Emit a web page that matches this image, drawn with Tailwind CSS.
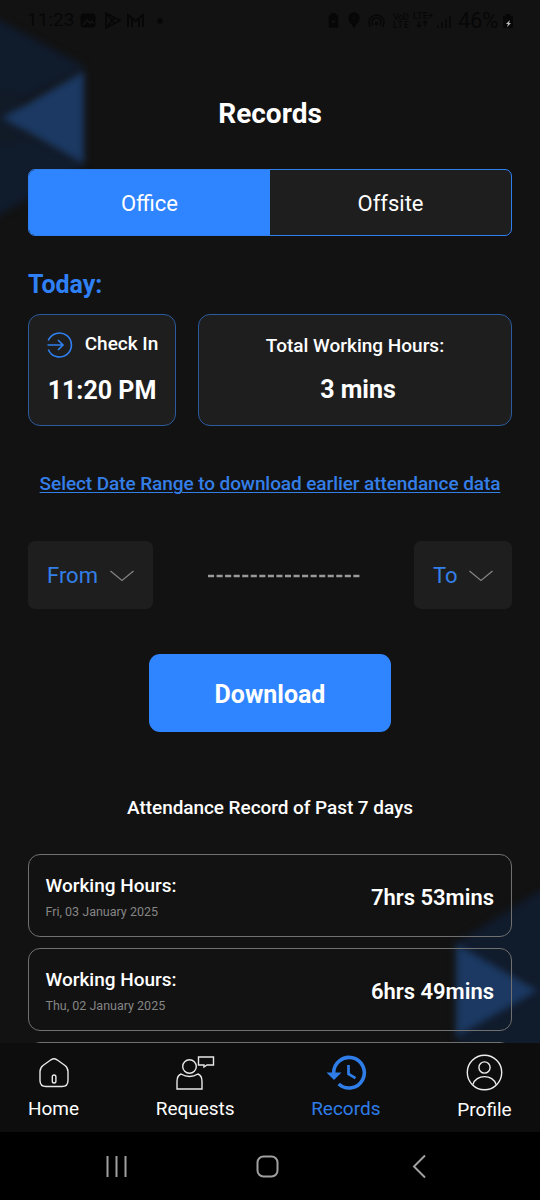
<!DOCTYPE html>
<html lang="en">
<head>
<meta charset="utf-8">
<title>Records</title>
<script src="https://cdn.jsdelivr.net/npm/@tailwindcss/browser@4"></script>
</head>
<body class="bg-[#121212]">
<div class="relative isolate flex h-[1200px] w-[540px] flex-col overflow-hidden bg-[#121212] font-['Roboto',sans-serif] text-white">

  <!-- blurred background triangles -->
  <svg class="absolute inset-0 -z-10" width="540" height="1200" viewBox="0 0 540 1200">
    <defs><filter id="soft" x="-30%" y="-30%" width="160%" height="160%" color-interpolation-filters="sRGB"><feGaussianBlur stdDeviation="3.500"/></filter></defs>
    <g filter="url(#soft)">
      <path d="M-30 4L86 67L0 112L-30 112Z" fill="#101b2c"/>
      <path d="M-30 122L0 122L86 166L-30 232Z" fill="#101b2c"/>
      <path d="M-30 90H20V146H-30Z" fill="#111a27"/>
      <path d="M2 118L84 71V164Z" fill="#1b3963"/>
      <path d="M570 872L454 944L538 987L570 987Z" fill="#101b2c"/>
      <path d="M570 985H538L454 1040L500 1070H570Z" fill="#101b2c"/>
      <path d="M538 990L456 944V1037Z" fill="#1b3963"/>
    </g>
  </svg>

  <!-- status bar -->
  <header class="flex h-10 shrink-0 items-center pl-[27px] text-[#070707]">
    <span class="w-[53px] text-[19px]">11:23</span>
    <svg width="86" height="20" viewBox="0 0 86 20" fill="none" stroke="#070707">
      <rect x="1" y="4" width="14" height="13" rx="2" fill="#070707"/><path d="M3 15l4-5 3 3 2-2 2 3" stroke="#151515" stroke-width="1.3"/>
      <path d="M26 3v15l14-7.500zM26 3l9 11M26 18l9-11" stroke-width="1.600"/>
      <path d="M48 17V5l7.500 6L63 5v12M52 17V9M59 17V9" stroke-width="2"/>
      <circle cx="80" cy="11" r="2.800" fill="#070707" stroke="none"/>
    </svg>
    <svg class="ml-auto" width="126" height="20" viewBox="0 0 126 20" fill="none" stroke="#070707" stroke-width="1.500">
      <path d="M2.500 6h2V4h4v2h2v11h-8z" fill="#070707"/><path d="M5 11.500h3" stroke="#151515"/>
      <path d="M27 17c-2-4-5-5-5-9a5 5 0 0 1 10 0c0 4-3 5-5 9z" fill="#070707"/><circle cx="27" cy="8" r="1.500" fill="#151515"/>
      <path d="M43.500 17a7.500 7.500 0 1 1 12 0M46 15a4.500 4.500 0 1 1 7 0"/><circle cx="49.500" cy="13.500" r="1"/>
      <g fill="#070707" stroke="none" font-family="Roboto" font-weight="500" font-size="9">
        <text x="66" y="10" textLength="16">VoD</text><text x="66" y="18" textLength="16">LTE</text><text x="86" y="9" textLength="20">LTE+</text>
      </g>
      <path d="M92 11v6m-2-2l2 2 2-2M98 17v-6m-2 2l2-2 2 2" stroke-width="1.200"/>
      <path d="M111 15v3M115 12v6M119 9v9M123 6v12"/>
    </svg>
    <span class="ml-[5px] w-[43px] whitespace-nowrap text-[22px] tracking-[-0.3px]">46%</span>
    <svg class="mr-[25px] shrink-0" width="14" height="20" viewBox="0 0 14 20"><path d="M2 6h2.500V4h5v2H12v12H2z" fill="#070707"/><path d="M9 10l-4 4h2l-1 3 4-4H8z" fill="#bbb"/></svg>
  </header>

  <main class="flex h-[1003px] shrink-0 flex-col overflow-hidden px-7">
    <h1 class="mt-[56px] h-9 text-center text-[28px] font-bold leading-9">Records</h1>

    <div class="mt-[37px] flex h-[67px] shrink-0 overflow-hidden rounded-[7px] border border-[#2f7fef] bg-[#1e1e1e] text-[22px]">
      <div class="flex flex-1 items-center justify-center bg-[#2f84ff] pt-px">Office</div>
      <div class="flex flex-1 items-center justify-center pt-px">Offsite</div>
    </div>

    <h2 class="mt-[33px] h-8 text-[25px] font-bold leading-8 text-[#2f80f5]">Today:</h2>

    <div class="mt-[13px] flex h-[112px] shrink-0 gap-[22px]">
      <section class="flex w-[148px] flex-col items-center rounded-[12px] border border-[#2c5a9f] bg-[#1e1e1e]">
        <div class="mt-[15px] flex h-7 items-center gap-[12px] pl-px text-[19px] font-medium">
          <svg class="mt-[1px]" width="26" height="26" viewBox="0 0 26 26" fill="none" stroke="#2f80f0" stroke-width="1.600"><path d="M1.300 8.500a12 12 0 1 1 0 9M.5 13h15M11 8l5 5-5 5"/></svg>
          <span>Check In</span>
        </div>
        <div class="mt-[17px] text-[25px] font-bold leading-8 whitespace-nowrap">11:20 PM</div>
      </section>
      <section class="flex flex-1 flex-col items-center rounded-[12px] border border-[#2c5a9f] bg-[#1e1e1e]">
        <div class="mt-[17px] text-[19px] font-medium leading-7">Total Working Hours:</div>
        <div class="mt-[14px] pl-[6px] text-[25px] font-bold leading-8">3 mins</div>
      </section>
    </div>

    <a class="mt-[44px] h-7 self-center whitespace-nowrap text-[19px] font-medium leading-7 tracking-[-0.08px] text-[#347ee8] underline decoration-1 underline-offset-2">Select Date Range to download earlier attendance data</a>

    <div class="mt-[43px] flex h-[68px] shrink-0 items-center justify-between">
      <button class="flex h-[68px] w-[125px] items-center rounded-[7px] bg-[#1e1e1e] pl-[19px] text-[22px] text-[#347ee8]">
        <span class="w-[62px] pt-px text-left">From</span>
        <svg class="mt-0.5" width="26" height="14" viewBox="0 0 26 14" fill="none" stroke="#858585" stroke-width="1.200"><path d="M1.500 2L13 11.500L24.500 2"/></svg>
      </button>
      <svg width="152" height="6" viewBox="0 0 152 6"><path d="M0 4H152" stroke="#999" stroke-width="2.500" stroke-dasharray="6.100 2.450"/></svg>
      <button class="flex h-[68px] w-[98px] items-center rounded-[7px] bg-[#1e1e1e] pl-[19px] text-[22px] text-[#347ee8]">
        <span class="w-[35px] pt-px text-left">To</span>
        <svg class="mt-0.5" width="26" height="14" viewBox="0 0 26 14" fill="none" stroke="#858585" stroke-width="1.200"><path d="M1.500 2L13 11.500L24.500 2"/></svg>
      </button>
    </div>

    <button class="mt-[45px] h-[78px] w-[242px] shrink-0 self-center rounded-[11px] bg-[#2f84ff] pt-[3px] text-[25px] font-bold">Download</button>

    <h3 class="mt-[62px] h-7 text-center text-[19px] font-medium leading-7 tracking-[-0.06px]">Attendance Record of Past 7 days</h3>

    <div class="mt-[32px] flex flex-col gap-[11px]">
      <article class="flex h-[83px] shrink-0 items-center justify-between rounded-[12px] border border-[#707070] px-4">
        <div class="pl-[0.5px] pt-0.5"><div class="text-[19px] font-medium leading-7">Working Hours:</div><div class="mt-[2px] text-[12.5px] leading-5 text-[#858585]">Fri, 03 January 2025</div></div>
        <div class="pr-px pt-[3px] text-[22px] font-semibold">7hrs 53mins</div>
      </article>
      <article class="flex h-[83px] shrink-0 items-center justify-between rounded-[12px] border border-[#707070] px-4">
        <div class="pl-[0.5px] pt-0.5"><div class="text-[19px] font-medium leading-7">Working Hours:</div><div class="mt-[2px] text-[12.5px] leading-5 text-[#858585]">Thu, 02 January 2025</div></div>
        <div class="pr-px pt-[3px] text-[22px] font-semibold">6hrs 49mins</div>
      </article>
      <article class="h-[83px] shrink-0 rounded-[12px] border border-[#707070]"></article>
    </div>
  </main>

  <nav class="flex h-[89px] shrink-0 justify-between bg-[#0d0d0d] pl-7 pr-7 text-[19px] leading-6">
    <div class="flex w-[51px] flex-col items-center">
      <svg class="mt-[10px]" width="40" height="40" viewBox="0 0 40 40" fill="none" stroke="#e8e8e8" stroke-width="1.400"><path d="M17 6.800Q20 4.800 23 6.800L31 12.500Q34 14.800 34 18.500V27.500Q34 33.500 28 33.500H12Q6 33.500 6 27.500V18.500Q6 14.800 9 12.500Z"/><rect x="18.300" y="22" width="3.600" height="8" rx="1.800"/></svg>
      <span class="mt-[4px]">Home</span>
    </div>
    <div class="flex w-[79px] flex-col items-center">
      <svg class="mt-[10px]" width="42" height="40" viewBox="0 0 42 40" fill="none" stroke="#e8e8e8" stroke-width="1.400"><circle cx="15.500" cy="13.500" r="6.800"/><path d="M3 36V28.500Q3 22.500 7 21Q15.500 26 24 21Q28 22.500 28 28.500V36Z"/><path d="M24.500 4H39.500V12H33L30 14V12H24.500Z"/></svg>
      <span class="mt-[4px]">Requests</span>
    </div>
    <div class="flex w-[69px] flex-col items-center text-[#2f7de8]">
      <svg class="mt-[10px]" width="42" height="40" viewBox="0 0 42 40" fill="none"><path d="M8.700 20A15.300 15.300 0 1 1 13.700 31" stroke="#2f7de8" stroke-width="3.600"/><path d="M1.500 19.500H16.500L9 27Z" fill="#2f7de8"/><path d="M23.500 12V21L30.500 25.200" stroke="#2f7de8" stroke-width="2.700"/></svg>
      <span class="mt-[4px]">Records</span>
    </div>
    <div class="flex w-[55px] flex-col items-center">
      <svg class="mt-[10px]" width="40" height="40" viewBox="0 0 40 40" fill="none" stroke="#eee" stroke-width="1.400"><circle cx="20.500" cy="19.500" r="17.200"/><circle cx="20.500" cy="14.500" r="5.600"/><path d="M9 31.500C11.500 21 29.500 21 32 31.500"/></svg>
      <span class="mt-[5px]">Profile</span>
    </div>
  </nav>

  <footer class="flex h-[68px] shrink-0 items-center bg-black pl-[106px]">
    <svg width="322" height="26" viewBox="0 0 322 26" fill="none" stroke="#a0a0a0" stroke-width="2"><path d="M1.500 3V24M10.500 3V24M19.500 3V24"/><rect x="151.500" y="3.500" width="20" height="20" rx="6"/><path d="M319 2.500L308 13.500L319 24.500"/></svg>
  </footer>
</div>
</body>
</html>
